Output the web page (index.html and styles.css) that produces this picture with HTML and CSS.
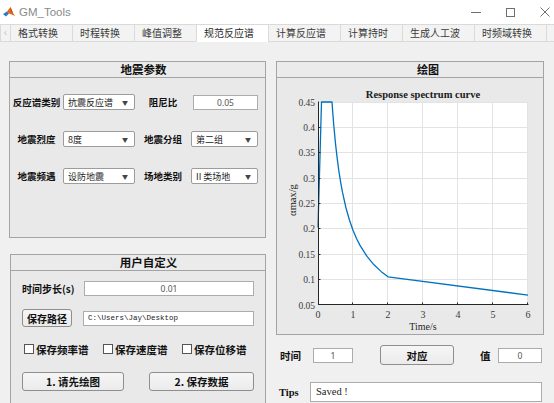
FILE: index.html
```html
<!DOCTYPE html>
<html lang="zh">
<head>
<meta charset="utf-8">
<title>GM_Tools</title>
<link rel="stylesheet" href="styles.css">
</head>
<body>
<header class="titlebar">
  <svg class="app-icon" viewBox="0 0 12 12">
    <path d="M0 8 L4 5.5 L6 7.5 L3 10.5 Z" fill="#2f78c4"/>
    <path d="M4 5.5 L7.5 1 L10 7 L12 10 L8.5 8.5 L6 7.5 Z" fill="#e2681c"/>
    <path d="M7.5 1 L9 4.5 L10 7 L8 5 Z" fill="#b8451a"/>
  </svg>
  <span class="title">GM_Tools</span>
  <div class="controls">
    <svg class="ctl-min" viewBox="0 0 10 10"><line x1="0" y1="5.5" x2="10" y2="5.5"/></svg>
    <svg class="ctl-max" viewBox="0 0 9 9"><rect x="0.5" y="0.5" width="8" height="8"/></svg>
    <svg class="ctl-close" viewBox="0 0 10 10"><line x1="0.5" y1="0.5" x2="9.5" y2="9.5"/><line x1="9.5" y1="0.5" x2="0.5" y2="9.5"/></svg>
  </div>
</header>

<nav class="tabs">
  <span class="tab-arrow">‹</span>
  <span class="tab">格式转换</span>
  <span class="tab">时程转换</span>
  <span class="tab">峰值调整</span>
  <span class="tab tab-active">规范反应谱</span>
  <span class="tab">计算反应谱</span>
  <span class="tab">计算持时</span>
  <span class="tab">生成人工波</span>
  <span class="tab">时频域转换</span>
  <span class="tab tab-partial"></span>
</nav>

<main class="content">
  <div class="left-col">
    <section class="panel panel-quake">
      <div class="panel-head head-quake">地震参数</div>
      <div class="quake-body">
        <span class="lbl">反应谱类别</span>
        <div class="select"><span>抗震反应谱</span><span class="arrow">▼</span></div>
        <span class="lbl">阻尼比</span>
        <div class="field field-damp">0.05</div>

        <span class="lbl">地震烈度</span>
        <div class="select"><span>8度</span><span class="arrow">▼</span></div>
        <span class="lbl">地震分组</span>
        <div class="select"><span>第二组</span><span class="arrow">▼</span></div>

        <span class="lbl">地震频遇</span>
        <div class="select"><span>设防地震</span><span class="arrow">▼</span></div>
        <span class="lbl">场地类别</span>
        <div class="select"><span>II 类场地</span><span class="arrow">▼</span></div>
      </div>
    </section>

    <section class="panel panel-user">
      <div class="panel-head head-user">用户自定义</div>
      <div class="user-body">
        <div class="row row-step">
          <span class="lbl-step">时间步长(s)</span>
          <div class="field field-step">0.01</div>
        </div>
        <div class="row row-path">
          <button class="btn btn-path">保存路径</button>
          <div class="field field-path">C:\Users\Jay\Desktop</div>
        </div>
        <div class="row row-checks">
          <label class="check"><span class="box"></span>保存频率谱</label>
          <label class="check"><span class="box"></span>保存速度谱</label>
          <label class="check"><span class="box"></span>保存位移谱</label>
        </div>
        <div class="row row-actions">
          <button class="btn btn-draw">1. 请先绘图</button>
          <button class="btn btn-save">2. 保存数据</button>
        </div>
      </div>
    </section>
  </div>

  <div class="right-col">
    <section class="panel panel-plot">
      <div class="panel-head head-plot">绘图</div>
      <div class="plot-body">
        <svg class="chart" width="266" height="256" viewBox="277 78 266 256">
          <rect x="318" y="102" width="210" height="203" fill="#ffffff"/>
          <g class="grid">
            <line x1="352.5" y1="102" x2="352.5" y2="305"/>
            <line x1="387.5" y1="102" x2="387.5" y2="305"/>
            <line x1="422.5" y1="102" x2="422.5" y2="305"/>
            <line x1="457.5" y1="102" x2="457.5" y2="305"/>
            <line x1="492.5" y1="102" x2="492.5" y2="305"/>
            <line x1="527.5" y1="102" x2="527.5" y2="305"/>
            <line x1="318" y1="102.5" x2="528" y2="102.5"/>
            <line x1="318" y1="127.5" x2="528" y2="127.5"/>
            <line x1="318" y1="152.5" x2="528" y2="152.5"/>
            <line x1="318" y1="178.5" x2="528" y2="178.5"/>
            <line x1="318" y1="203.5" x2="528" y2="203.5"/>
            <line x1="318" y1="228.5" x2="528" y2="228.5"/>
            <line x1="318" y1="254.5" x2="528" y2="254.5"/>
            <line x1="318" y1="279.5" x2="528" y2="279.5"/>
          </g>
          <polyline class="curve" points="318,227.6 321.5,102 332,102 332.7,111.8 333.75,125 335.5,143.6 337.25,158.9 339,171.8 340.75,182.8 342.5,192.4 346,208 349.5,220.3 353,230.3 356.5,238.5 360,245.4 367,256.4 374,264.8 381,271.4 388,276.8 528,295.1"/>
          <g class="axis">
            <line x1="318.5" y1="101.5" x2="318.5" y2="305"/>
            <line x1="318" y1="304.5" x2="528.5" y2="304.5"/>
            <line x1="318" y1="127.5" x2="320.5" y2="127.5"/>
            <line x1="318" y1="152.5" x2="320.5" y2="152.5"/>
            <line x1="318" y1="178.5" x2="320.5" y2="178.5"/>
            <line x1="318" y1="203.5" x2="320.5" y2="203.5"/>
            <line x1="318" y1="228.5" x2="320.5" y2="228.5"/>
            <line x1="318" y1="254.5" x2="320.5" y2="254.5"/>
            <line x1="318" y1="279.5" x2="320.5" y2="279.5"/>
            <line x1="352.5" y1="305" x2="352.5" y2="302.5"/>
            <line x1="387.5" y1="305" x2="387.5" y2="302.5"/>
            <line x1="422.5" y1="305" x2="422.5" y2="302.5"/>
            <line x1="457.5" y1="305" x2="457.5" y2="302.5"/>
            <line x1="492.5" y1="305" x2="492.5" y2="302.5"/>
            <line x1="527.5" y1="305" x2="527.5" y2="302.5"/>
          </g>
          <g class="yticks">
            <text x="315" y="105.5">0.45</text>
            <text x="315" y="130.5">0.4</text>
            <text x="315" y="156">0.35</text>
            <text x="315" y="181.5">0.3</text>
            <text x="315" y="207">0.25</text>
            <text x="315" y="232">0.2</text>
            <text x="315" y="257.5">0.15</text>
            <text x="315" y="283">0.1</text>
            <text x="315" y="308.5">0.05</text>
          </g>
          <g class="xticks">
            <text x="318" y="318">0</text>
            <text x="353" y="318">1</text>
            <text x="388" y="318">2</text>
            <text x="423" y="318">3</text>
            <text x="458" y="318">4</text>
            <text x="493" y="318">5</text>
            <text x="528" y="318">6</text>
          </g>
          <text class="chart-title" x="423" y="97.5">Response spectrum curve</text>
          <text class="xlabel" x="423" y="330">Time/s</text>
          <text class="ylabel" x="0" y="0" transform="translate(296 200) rotate(-90)">αmax/g</text>
        </svg>
      </div>
    </section>

    <div class="query-row">
      <span class="lbl-q lbl-time">时间</span>
      <div class="field field-time">1</div>
      <button class="btn btn-match">对应</button>
      <span class="lbl-q lbl-val">值</span>
      <div class="field field-val">0</div>
    </div>

    <div class="tips-row">
      <span class="lbl-tips">Tips</span>
      <div class="field field-tips">Saved !</div>
    </div>
  </div>
</main>
</body>
</html>
```

FILE: styles.css
```css
* {
  box-sizing: border-box;
  margin: 0;
  padding: 0;
}

html, body {
  width: 554px;
  height: 403px;
  overflow: hidden;
}

body {
  background: #f0f0f0;
  font-family: "Noto Sans CJK SC", "Noto Sans", sans-serif;
  color: #111;
}

/* ---------- title bar ---------- */
.titlebar {
  height: 24px;
  background: #ffffff;
  display: flex;
  align-items: center;
  padding-left: 3px;
}

.app-icon {
  width: 12px;
  height: 12px;
}

.title {
  margin-left: 4px;
  font: 11.5px "Liberation Sans", Arial, sans-serif;
  color: #8a8a8a;
}

.controls {
  margin-left: auto;
  display: flex;
  align-items: center;
  gap: 25px;
  padding-right: 4px;
}

.controls svg {
  stroke: #6f6f6f;
  stroke-width: 1;
  fill: none;
}

.ctl-min { width: 10px; height: 10px; }
.ctl-max { width: 9px; height: 9px; }
.ctl-close { width: 10px; height: 10px; }

/* ---------- tabs ---------- */
.tabs {
  height: 18px;
  display: flex;
  background: #ffffff;
  overflow: hidden;
  white-space: nowrap;
}

.tab-arrow {
  flex: none;
  width: 10px;
  border: 1px solid #dadada;
  border-right: none;
  background: #f3f3f3;
  color: #c4c4c4;
  font: 10px "Liberation Sans", sans-serif;
  line-height: 15px;
  text-align: center;
}

.tab {
  flex: none;
  padding: 0 14px 0 7px;
  border: 1px solid #dadada;
  border-right: none;
  background: #f3f3f3;
  color: #3a3a3a;
  font-size: 10px;
  line-height: 16px;
}

.tab-active {
  background: #ffffff;
  border-bottom-color: #ffffff;
  color: #2a2a2a;
}

.tab-partial {
  width: 30px;
}

/* ---------- layout ---------- */
.content {
  display: flex;
  gap: 10px;
  padding: 19px 0 0 9px;
}

.left-col {
  width: 257px;
  flex: none;
  display: flex;
  flex-direction: column;
}

.right-col {
  width: 268px;
  flex: none;
  display: flex;
  flex-direction: column;
}

/* ---------- panels ---------- */
.panel {
  border: 1px solid #a4a4a4;
  background: #e9e9e9;
}

.panel-head {
  height: 16px;
  border-bottom: 1px solid #a4a4a4;
  background: #ebebeb;
  text-align: center;
  font-weight: 700;
  font-size: 11.5px;
  line-height: 15px;
  color: #111;
}

.head-quake { padding-left: 12px; }
.head-user { padding-left: 21px; }
.head-plot { padding-left: 36px; font-size: 11px; }

.panel-quake { height: 177px; }

.panel-user {
  width: 256px;
  height: 160px;
  margin: 16px 0 0 1px;
}

.panel-plot { height: 274px; }

/* ---------- quake parameters ---------- */
.quake-body {
  display: grid;
  grid-template-columns: 53px 72px 56px 67px;
  grid-auto-rows: 16px;
  row-gap: 21px;
  align-items: center;
  padding-top: 16px;
}

.lbl {
  text-align: center;
  font-weight: 700;
  font-size: 9.5px;
  white-space: nowrap;
  color: #111;
}

.select {
  height: 16px;
  display: flex;
  align-items: center;
  justify-content: space-between;
  padding: 0 6px 0 4px;
  border: 1px solid #9c9c9c;
  border-radius: 2px;
  background: #ffffff;
  font-size: 9px;
  color: #222;
  white-space: nowrap;
}

.arrow {
  font-size: 6px;
  color: #444;
}

.field {
  height: 15px;
  border: 1px solid #acacac;
  background: #ffffff;
  font: 8.5px "Noto Sans", sans-serif;
  line-height: 13px;
  color: #555;
  text-align: center;
  white-space: nowrap;
  overflow: hidden;
}

.field-damp {
  width: 65px;
  justify-self: end;
}

/* ---------- user panel ---------- */
.user-body {
  padding: 10px 0 0 11px;
}

.row {
  display: flex;
  align-items: center;
}

.row-step { height: 15px; }

.lbl-step {
  width: 62px;
  font-weight: 700;
  font-size: 10px;
  white-space: nowrap;
}

.field-step { width: 170px; }

.row-path {
  height: 18px;
  margin-top: 13px;
}

.btn {
  border: 1px solid #8e8e8e;
  border-radius: 3px;
  background: linear-gradient(#f6f6f6, #ebebeb);
  font-family: "Noto Sans CJK SC", "Noto Sans", sans-serif;
  font-weight: 700;
  font-size: 10.5px;
  color: #111;
  display: flex;
  align-items: center;
  justify-content: center;
  white-space: nowrap;
}

.btn-path {
  width: 50px;
  height: 18px;
  font-size: 10px;
}

.field-path {
  width: 171px;
  margin-left: 11px;
  text-align: left;
  padding-left: 4px;
  font: 7.5px "Liberation Mono", monospace;
  line-height: 13px;
  color: #222;
}

.row-checks {
  height: 14px;
  margin-top: 15px;
  padding-left: 2px;
}

.check {
  width: 79px;
  display: flex;
  align-items: center;
  gap: 2px;
  font-weight: 700;
  font-size: 10.5px;
  white-space: nowrap;
}

.box {
  width: 10px;
  height: 10px;
  border: 1px solid #555;
  background: #ffffff;
  flex: none;
}

.row-actions {
  height: 19px;
  margin-top: 16px;
  gap: 25px;
}

.btn-draw { width: 102px; height: 19px; }
.btn-save { width: 105px; height: 19px; }

/* ---------- chart ---------- */
.plot-body {
  height: 256px;
}

.chart {
  display: block;
}

.grid line {
  stroke: #e3e3e3;
  stroke-width: 1;
}

.axis line {
  stroke: #262626;
  stroke-width: 1;
}

.curve {
  fill: none;
  stroke: #0072bd;
  stroke-width: 1.3;
  stroke-linejoin: round;
}

.yticks text {
  font: 9.5px "Liberation Serif", serif;
  fill: #3a3a3a;
  text-anchor: end;
}

.xticks text {
  font: 10px "Liberation Serif", serif;
  fill: #3a3a3a;
  text-anchor: middle;
}

.chart-title {
  font: bold 10.5px "Liberation Serif", serif;
  fill: #1a1a1a;
  text-anchor: middle;
}

.xlabel {
  font: 10px "Liberation Serif", serif;
  fill: #262626;
  text-anchor: middle;
}

.ylabel {
  font: 10.5px "Liberation Serif", serif;
  fill: #262626;
  text-anchor: middle;
}

/* ---------- query rows ---------- */
.query-row {
  height: 20px;
  margin-top: 10px;
  display: flex;
  align-items: center;
}

.lbl-q {
  font-weight: 700;
  font-size: 10.5px;
  white-space: nowrap;
}

.lbl-time {
  width: 22px;
  margin-left: 4px;
}

.field-time {
  width: 40px;
  margin-left: 11px;
}

.btn-match {
  width: 74px;
  height: 20px;
  margin-left: 27px;
}

.lbl-val {
  width: 10px;
  margin-left: 26px;
}

.field-val {
  width: 44px;
  margin-left: 8px;
}

.tips-row {
  height: 20px;
  margin-top: 17px;
  display: flex;
  align-items: center;
}

.lbl-tips {
  width: 20px;
  margin-left: 3px;
  font: bold 10.5px "Liberation Serif", serif;
}

.field-tips {
  width: 232px;
  height: 20px;
  margin-left: 11px;
  padding-left: 5px;
  text-align: left;
  font: 10.5px "Liberation Serif", serif;
  line-height: 18px;
  color: #222;
}
```
